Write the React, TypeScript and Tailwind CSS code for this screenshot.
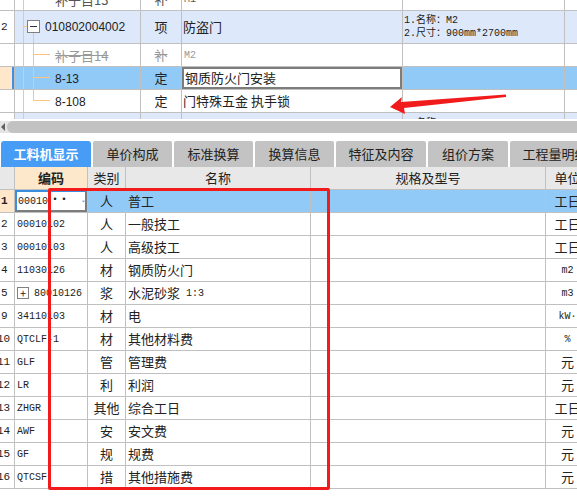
import React from 'react';

const CJK = "font-['Noto_Sans_CJK_SC',sans-serif]";
const MONO = "font-['Liberation_Mono','Noto_Sans_CJK_SC',monospace]";
const SANS = "font-['Liberation_Sans','Noto_Sans_CJK_SC',sans-serif]";

const topCols = 'grid grid-cols-[15px_126px_41px_221px_162px_40px]';
const botCols = 'grid grid-cols-[15px_73px_38px_185px_235px_44px]';
const cell = 'relative h-full overflow-hidden border-r border-[#c0c0c0]';
const orange = 'absolute bg-[#ffc47c]';

type Item = {
  no: number;
  code: string;
  type: string;
  name: string;
  unit: string;
  plus?: boolean;
};

const items: Item[] = [
  { no: 1, code: '00010', type: '人', name: '普工', unit: '工日' },
  { no: 2, code: '00010102', type: '人', name: '一般技工', unit: '工日' },
  { no: 3, code: '00010103', type: '人', name: '高级技工', unit: '工日' },
  { no: 4, code: '11030126', type: '材', name: '钢质防火门', unit: 'm2' },
  { no: 5, code: '80010126', type: '浆', name: '水泥砂浆 1:3', unit: 'm3', plus: true },
  { no: 9, code: '34110103', type: '材', name: '电', unit: 'kW·' },
  { no: 10, code: 'QTCLF-1', type: '材', name: '其他材料费', unit: '%' },
  { no: 11, code: 'GLF', type: '管', name: '管理费', unit: '元' },
  { no: 12, code: 'LR', type: '利', name: '利润', unit: '元' },
  { no: 13, code: 'ZHGR', type: '其他', name: '综合工日', unit: '工日' },
  { no: 14, code: 'AWF', type: '安', name: '安文费', unit: '元' },
  { no: 15, code: 'GF', type: '规', name: '规费', unit: '元' },
  { no: 16, code: 'QTCSF', type: '措', name: '其他措施费', unit: '元' },
];

const tabs = [
  { label: '单价构成', w: 'w-[79px]' },
  { label: '标准换算', w: 'w-[79px]' },
  { label: '换算信息', w: 'w-[79px]' },
  { label: '特征及内容', w: 'w-[90px]' },
  { label: '组价方案', w: 'w-[80px]' },
  { label: '工程量明细', w: 'w-[90px]' },
];

const TopSection: React.FC = () => (
  <div className="h-[119px] overflow-hidden">
    <div className="-mt-[12px] text-[13px] text-[#222]">
      {/* row above, cut off */}
      <div className={`${topCols} h-[23px] border-b border-[#c0c0c0]`}>
        <div className={cell} />
        <div className={cell}>
          <span className={`${orange} left-[8px] top-0 h-full w-px`} />
          <span className={`absolute left-[40px] top-[2px] ${CJK} text-[#555] line-through`}>补子目13</span>
        </div>
        <div className={`${cell} flex items-center justify-center ${CJK} text-[#555]`}>补</div>
        <div className={`${cell} flex items-center pl-[2px] ${MONO} text-[10px] text-[#555]`}>M1</div>
        <div className={cell} />
        <div className={cell} />
      </div>

      {/* 010802004002 */}
      <div className={`${topCols} h-[33px] border-b border-[#c0c0c0]`}>
        <div className={`${cell} flex items-center pl-[1px] ${MONO} text-[11px]`}>2</div>
        <div className={`${cell} bg-[#dde9fb]`}>
          <span className={`${orange} left-[8px] top-0 h-full w-px`} />
          <span className={`${orange} left-[8px] top-[15px] h-px w-[4px]`} />
          <span className="absolute left-[12px] top-[9px] flex h-[13px] w-[13px] items-center justify-center border border-[#808080] bg-white">
            <span className="h-px w-[7px] bg-[#333]" />
          </span>
          <span className={`${orange} left-[18px] top-[22px] bottom-0 w-px`} />
          <span className={`absolute left-[30px] top-[7px] ${SANS} text-[12px]`}>010802004002</span>
        </div>
        <div className={`${cell} flex items-center justify-center bg-[#dde9fb] ${CJK}`}>项</div>
        <div className={`${cell} flex items-center bg-[#dde9fb] pl-[1px] ${CJK}`}>防盗门</div>
        <div className={`${cell} flex flex-col justify-center bg-[#dde9fb] pl-[1px] ${MONO} text-[10px] leading-[13px]`}>
          <span>1.名称：M2</span>
          <span>2.尺寸：900mm*2700mm</span>
        </div>
        <div className={`${cell} bg-[#dde9fb]`} />
      </div>

      {/* 补子目14 */}
      <div className={`${topCols} h-[23px] border-b border-[#c0c0c0]`}>
        <div className={cell} />
        <div className={cell}>
          <span className={`${orange} left-[8px] top-0 h-full w-px`} />
          <span className={`${orange} left-[18px] top-0 h-full w-px`} />
          <span className={`${orange} left-[18px] top-[10px] h-px w-[17px]`} />
          <span className={`absolute left-[40px] top-[2px] ${CJK} text-[#999] line-through`}>补子目14</span>
        </div>
        <div className={`${cell} flex items-center justify-center ${CJK} text-[#999] line-through`}>补</div>
        <div className={`${cell} flex items-center pl-[2px] ${MONO} text-[10px] text-[#999]`}>M2</div>
        <div className={cell} />
        <div className={cell} />
      </div>

      {/* 8-13 selected */}
      <div className={`${topCols} h-[23px] border-b border-[#c0c0c0]`}>
        <div className={`${cell} bg-[#ffe7cb]`}>
          <span className="absolute right-0 top-0 h-full w-[2px] bg-[#3f8fe4]" />
        </div>
        <div className={`${cell} bg-[#91c9f7]`}>
          <span className={`${orange} left-[8px] top-0 h-full w-px`} />
          <span className={`${orange} left-[18px] top-0 h-full w-px`} />
          <span className={`${orange} left-[18px] top-[10px] h-px w-[17px]`} />
          <span className={`absolute left-[40px] top-[3px] ${SANS} text-[12px]`}>8-13</span>
        </div>
        <div className={`${cell} flex items-center justify-center bg-[#91c9f7] ${CJK}`}>定</div>
        <div className={`${cell} bg-white`}>
          <div className={`flex h-full items-center border-2 border-[#7c7c7c] pl-[1px] ${CJK}`}>钢质防火门安装</div>
        </div>
        <div className={`${cell} bg-[#91c9f7]`} />
        <div className={`${cell} bg-[#91c9f7]`} />
      </div>

      {/* 8-108 */}
      <div className={`${topCols} h-[23px] border-b border-[#c0c0c0]`}>
        <div className={cell} />
        <div className={cell}>
          <span className={`${orange} left-[8px] top-0 h-full w-px`} />
          <span className={`${orange} left-[18px] top-0 h-[11px] w-px`} />
          <span className={`${orange} left-[18px] top-[10px] h-px w-[17px]`} />
          <span className={`absolute left-[40px] top-[3px] ${SANS} text-[12px]`}>8-108</span>
        </div>
        <div className={`${cell} flex items-center justify-center ${CJK}`}>定</div>
        <div className={`${cell} flex items-center pl-[1px] ${CJK}`}>门特殊五金 执手锁</div>
        <div className={cell} />
        <div className={cell} />
      </div>

      {/* next item, cut off */}
      <div className={`${topCols} h-[23px] border-b border-[#c0c0c0]`}>
        <div className={cell} />
        <div className={`${cell} bg-[#dde9fb]`}>
          <span className={`${orange} left-[8px] top-0 h-full w-px`} />
        </div>
        <div className={`${cell} bg-[#dde9fb]`} />
        <div className={`${cell} bg-[#dde9fb]`} />
        <div className={`${cell} bg-[#dde9fb] pl-[1px] pt-[3px] ${MONO} text-[10px]`}>1.名称：M3</div>
        <div className={`${cell} bg-[#dde9fb]`} />
      </div>
    </div>
  </div>
);

const ItemRow: React.FC<{ item: Item; first: boolean }> = ({ item, first }) => {
  const rowBg = first ? 'bg-[#91c9f7]' : 'bg-white';
  return (
    <div className={`${botCols} h-[23px] border-b border-[#c0c0c0] text-[13px] text-[#222]`}>
      <div
        className={`${cell} flex items-center ${MONO} text-[11px] ${first ? 'bg-[#ffe7cb] font-bold' : 'bg-white'} ${
          item.no > 9 ? '-ml-[3px] pl-0' : 'pl-[1px]'
        }`}
      >
        {item.no}
      </div>
      <div className={`${cell} bg-white`}>
        {first ? (
          <div className="flex h-full items-center border-2 border-[#3b8de0] border-b-[#7c7c7c] border-r-[#7c7c7c] pl-[1px]">
            <span className={`${MONO} text-[10px]`}>{item.code}</span>
            <span className="ml-[2px] -translate-y-[3px] text-[10px] font-bold tracking-[-1px]">··</span>
            <svg className="ml-[14px]" width="9" height="5" viewBox="0 0 9 5">
              <path d="M0 0 H9 L4.5 5 Z" fill="#4b8ccc" />
            </svg>
          </div>
        ) : (
          <div className="flex h-full items-center pl-[2px]">
            {item.plus && (
              <span className="mr-[5px] flex h-[12px] w-[12px] items-center justify-center border border-[#808080] text-[11px] leading-none">
                +
              </span>
            )}
            <span className={`${MONO} text-[10px]`}>{item.code}</span>
          </div>
        )}
      </div>
      <div className={`${cell} flex items-center justify-center ${rowBg} ${CJK}`}>{item.type}</div>
      <div className={`${cell} flex items-center whitespace-pre pl-[2px] ${rowBg} ${CJK}`}>
        {item.name.includes('1:3') ? (
          <>
            水泥砂浆 <span className={`${MONO} ml-[3px] text-[10px]`}>1:3</span>
          </>
        ) : (
          item.name
        )}
      </div>
      <div className={`${cell} ${rowBg}`} />
      <div
        className={`${cell} flex items-center justify-center ${rowBg} ${
          /^[\u4e00-\u9fff]/.test(item.unit) ? CJK : `${MONO} text-[10px]`
        }`}
      >
        {item.unit}
      </div>
    </div>
  );
};

const App: React.FC = () => {
  return (
    <div className={`relative h-[496px] w-[577px] overflow-hidden bg-white ${CJK}`}>
      <TopSection />

      {/* horizontal scrollbar */}
      <div className="mt-[2px] flex h-[12px] items-center bg-[#e4e4e4]">
        <svg width="5" height="8" viewBox="0 0 5 8" className="ml-[1px]">
          <path d="M4 0 L0 4 L4 8 Z" fill="#606060" />
        </svg>
        <div className="ml-[1px] h-[12px] flex-1 rounded-l-full bg-[#c2c2c2]" />
      </div>

      {/* tabs */}
      <div className="mt-[8px] flex h-[26px] gap-[2px] pl-[1px] text-[13px]">
        <div className="flex w-[90px] shrink-0 items-center justify-center rounded-t-[3px] bg-[#479df6] font-bold text-white">
          工料机显示
        </div>
        {tabs.map((t) => (
          <div
            key={t.label}
            className={`flex shrink-0 items-center justify-center rounded-t-[2px] bg-[#c3c3c3] text-[#222] ${t.w}`}
          >
            {t.label}
          </div>
        ))}
      </div>

      {/* header */}
      <div className={`${botCols} h-[23px] border-b border-[#c0c0c0] bg-[#e8e8e8] text-[13px] text-[#222]`}>
        <div className={cell} />
        <div className={`${cell} flex items-center justify-center bg-[#fde8cc] font-bold`}>编码</div>
        <div className={`${cell} flex items-center justify-center`}>类别</div>
        <div className={`${cell} flex items-center justify-center`}>名称</div>
        <div className={`${cell} flex items-center justify-center`}>规格及型号</div>
        <div className={`${cell} flex items-center justify-center`}>单位</div>
      </div>

      {items.map((it, i) => (
        <ItemRow key={it.no} item={it} first={i === 0} />
      ))}

      {/* red annotation box */}
      <div className="pointer-events-none absolute left-[48px] top-[188px] h-[302px] w-[282px] rounded-[2px] border-[3px] border-[#f21b1b]" />

      {/* red arrow */}
      <svg className="pointer-events-none absolute left-0 top-0" width="577" height="496" viewBox="0 0 577 496">
        <polygon points="390,107 402,97 401,102 506,94.5 506,97 404,108 405,114" fill="#f21b1b" />
      </svg>
    </div>
  );
};

export default App;
